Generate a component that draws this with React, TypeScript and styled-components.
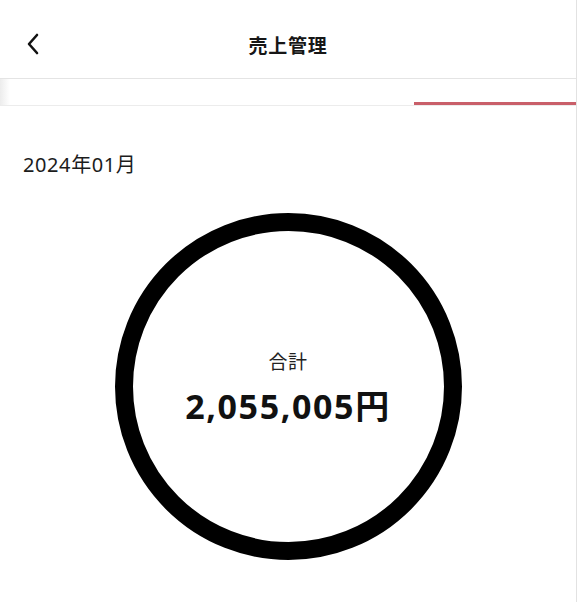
import React from "react";
import styled, { createGlobalStyle } from "styled-components";

const Global = createGlobalStyle`
  html, body { margin: 0; padding: 0; background: #ffffff; }
  body { font-family: "Noto Sans", "Noto Sans CJK JP", sans-serif; color: #161616; }
  * { box-sizing: border-box; }
`;

const Screen = styled.div`
  width: 577px;
  min-height: 602px;
  border-right: 1px solid #e2e2e2;
  background: #fff;
  display: flex;
  flex-direction: column;
`;

const Header = styled.header`
  height: 79px;
  padding-top: 10px;
  display: grid;
  grid-template-columns: 1fr auto 1fr;
  align-items: center;
  border-bottom: 1px solid #e4e4e4;
`;

const BackButton = styled.button`
  justify-self: start;
  margin-left: 24px;
  width: 18px;
  height: 24px;
  padding: 0;
  border: none;
  background: none;
  display: flex;
  align-items: center;
  justify-content: center;
  color: #111;
`;

const Title = styled.h1`
  margin: 0;
  font-family: "Noto Sans CJK JP", sans-serif;
  font-size: 19px;
  font-weight: 700;
  color: #161616;
  letter-spacing: 0.8px;
`;

const TabBar = styled.nav`
  position: relative;
  height: 27px;
  display: flex;
  justify-content: flex-end;
  border-bottom: 1px solid #ececec;
  &::before {
    content: "";
    position: absolute;
    left: 0;
    top: 0;
    bottom: 0;
    width: 10px;
    background: linear-gradient(to right, #ececec, rgba(255, 255, 255, 0));
  }
`;

const Tab = styled.div<{ $active?: boolean; $width: number }>`
  width: ${(p) => p.$width}px;
  height: 100%;
  border-bottom: 3px solid ${(p) => (p.$active ? "#c95f69" : "transparent")};
  margin-bottom: -2px;
`;

const Content = styled.main`
  padding: 45px 23px 0;
  display: flex;
  flex-direction: column;
`;

const MonthLabel = styled.div`
  font-size: 20px;
  line-height: 28px;
  color: #1c1c1c;
  letter-spacing: 0.6px;
`;

const RingWrap = styled.div`
  margin-top: 34px;
  display: flex;
  justify-content: center;
`;

const Ring = styled.div`
  width: 347px;
  height: 347px;
  border-radius: 50%;
  border: 18px solid #000;
  display: flex;
  flex-direction: column;
  align-items: center;
  justify-content: center;
  gap: 11px;
`;

const TotalLabel = styled.div`
  font-family: "Noto Sans CJK JP", sans-serif;
  font-size: 19px;
  line-height: 28px;
  color: #222;
  letter-spacing: 0.5px;
`;

const TotalValue = styled.div`
  font-size: 34px;
  line-height: 40px;
  font-weight: 700;
  color: #111;
  letter-spacing: 1.6px;
`;

export default function App() {
  return (
    <>
      <Global />
      <Screen>
        <Header>
          <BackButton aria-label="戻る">
            <svg width="14" height="22" viewBox="0 0 14 22" fill="none">
              <polyline
                points="11,2 3,11 11,20"
                stroke="#111"
                strokeWidth="2.6"
                strokeLinecap="round"
                strokeLinejoin="round"
              />
            </svg>
          </BackButton>
          <Title>売上管理</Title>
          <span />
        </Header>
        <TabBar>
          <Tab $width={162} $active />
        </TabBar>
        <Content>
          <MonthLabel>2024年01月</MonthLabel>
          <RingWrap>
            <Ring>
              <TotalLabel>合計</TotalLabel>
              <TotalValue>2,055,005円</TotalValue>
            </Ring>
          </RingWrap>
        </Content>
      </Screen>
    </>
  );
}
